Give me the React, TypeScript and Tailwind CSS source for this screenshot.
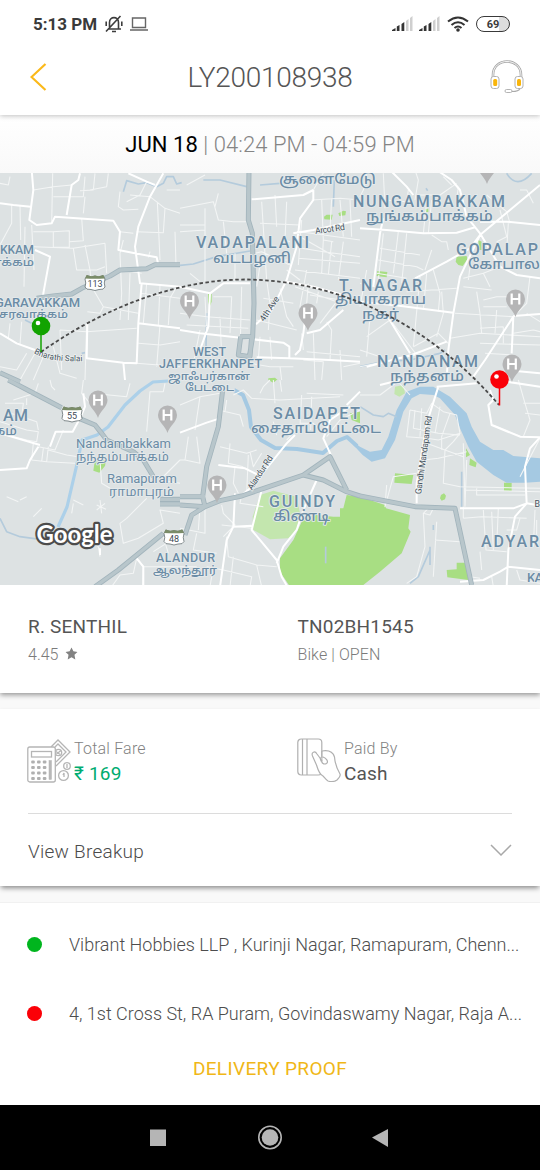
import React from "react";

type Tile = {
  x: number;
  y: number;
  minor?: string;
  main?: string;
  highway?: string;
  stream?: string;
  river?: string;
  park?: string;
  paleParks?: string;
};

const tiles: Tile[] = [
  {
    x: 0,
    y: 170,
    minor:
      "M30 20L25 45L0 40M35 105L35 160L0 225M60 105L62 210M155 160L158 10M160 80L250 80L255 20M250 130L255 80M285 10L280 60L240 62M215 45L160 50L100 60M100 185L158 185L208 182L208 232L160 232L160 185M208 215L250 212L245 145M95 165L102 300M75 170L72 350M102 230L220 235L315 220M220 235L230 300L290 300L315 290M255 225L270 300L275 350L310 410L300 430L262 425M315 220L320 310M360 185L400 190M370 210L360 250L365 370M410 185L490 188L495 115L450 80M450 80L390 75M440 35L420 75L380 95M360 65L355 110L370 120L415 118M500 60L540 60M495 115L540 130M472 95L480 270M525 185L528 285M365 370L360 450M365 300L425 310M390 310L385 450M310 410L415 430M420 370L540 385M440 340L430 460M480 345L475 465M530 350L510 385L505 465M180 480L260 485L410 475M180 480L185 600M160 530L180 610L230 625M260 460L255 630M415 520L480 525L540 515M410 580L540 590M480 465L470 590M65 455L60 525M30 460L25 505M0 590L50 600L80 550M105 550L60 630M130 560L100 630M325 10L320 50L270 60M450 245L445 262",
    main: "M0 100L40 105L92 110M95 0L100 60L88 150L110 165L155 160L165 140L340 152L360 185L355 240L405 250L470 262L475 285M240 10L235 30L215 45L200 135M490 10L450 80L415 170L405 230L420 340L540 350M0 490L50 520L105 540M415 460L540 475M105 240L150 260L130 370L130 400M385 10L440 35L465 45M425 340L415 460L410 580L370 578L260 565L262 460M370 578L375 630",
    highway: "M110 385L160 378L215 372L245 355L330 318L360 300L440 296L465 284L540 284M0 608L60 635",
    stream: "M370 65L380 32L415 42L440 38L470 50L490 40L500 20L520 20L530 42L545 38M75 450L95 460M245 550L255 548",
  },
  {
    x: 180,
    y: 170,
    minor:
      "M20 45L75 15M0 115L100 95L115 150L160 155L200 155M75 115L75 335M75 120L75 180L0 185M105 110L115 70M0 165L75 165M130 155L140 250M165 250L165 335M30 310L60 335M240 270L330 270M245 95L260 330M240 160L360 165M225 250L245 245L330 285M320 95L315 210L330 215M285 75L290 170M360 185L540 210M365 150L355 285M400 60L435 0M395 90L480 85L540 90M425 90L430 210L460 215M455 85L450 180M480 90L490 200M510 90L515 200M365 235L430 245L540 260M355 265L540 280M345 300L540 325M430 210L425 310M455 215L445 315M490 215L475 330M360 200L430 240L465 260M380 300L360 410L370 450M385 340L380 400M345 350L470 395L420 460M390 375L540 400M300 355L320 440L340 470M250 385L340 400M230 450L350 480M260 330L270 400L265 480M320 300L360 330M415 365L410 400M240 285L230 350M0 430L80 440L210 450M20 465L205 475M75 380L80 480M100 380L155 380L150 490M120 440L125 560M185 350L180 550M240 500L235 570M270 500L275 570M365 490L370 540M400 490L405 630M440 455L455 480L450 570M480 540L485 630M380 545L540 560M370 570L430 575L425 630M490 590L540 580M340 590L270 590L210 580M300 590L305 630M60 480L30 630",
    main: "M0 350L90 370L130 340L210 340M90 370L85 470L60 540M0 480L60 490L310 518L328 530L328 565L230 562M400 60L400 90L360 145L350 230L320 330L275 420L228 463M400 60L370 75L215 88M340 190L400 180L540 150M320 335L400 350L490 375M375 450L370 490L360 540L345 555M328 565L450 570L540 575M380 490L420 480L490 420",
    highway: "M207 0L205 150L217 190L222 400L218 500L208 560M180 500L215 500L210 560L175 555L182 500",
    stream: "M70 30L120 30L200 50M240 45L300 40L400 30M463 30L460 110M80 430L78 530M0 286L40 282L110 260L210 243",
    park: "M432 140L440 134L458 134L455 149L433 148ZM475 130L490 122L498 124L496 136L478 138ZM84 372H95V395L89 410L84 395ZM265 625L285 623L293 630H265Z",
  },
  {
    x: 360,
    y: 170,
    minor:
      "M20 10L10 60L0 80M75 90L140 95L145 60M75 115L70 10M165 0L175 30L165 90M170 75L240 75L290 40M200 95L190 190M215 90L205 190M215 195L245 215L260 215L265 240M70 190L55 330M115 185L100 310M140 190L125 340M60 235L180 255M55 270L170 290L190 300M50 310L140 325M215 240L195 300M180 320L160 530M200 310L190 420M220 300L240 370L235 425M140 365L290 355M245 365L250 430L230 500M0 340L45 350M20 300L0 410M30 440L20 560M90 450L20 500M80 435L170 555L0 590M160 530L235 490L265 520M0 540L60 560M310 325L370 310L420 290M310 350L395 360M330 290L325 330M285 430L460 440M350 365L360 430M370 390L410 380L440 380M370 410L440 410M360 430L365 490M410 420L405 490M360 490L540 500M360 520L540 525M360 475L430 470M430 470L430 520M270 505L360 490M375 550L460 555M510 320L500 400L460 440M500 430L540 455M460 490L520 480L540 485M520 100L500 60L480 60M420 120L440 200L410 215M445 160L440 240M380 75L410 100L440 125L450 160M295 50L290 90L300 110M250 20L275 45M370 310L390 350",
    main: "M90 0L140 50L160 75M70 145L60 190L40 350M0 175L80 180L190 190L290 188L345 172M230 0L275 30L300 60L320 140L360 190L420 290L470 315L540 325M540 45L450 120L360 195L330 235L260 275L165 325M360 155H440L540 165M360 195L300 320L280 430L265 540L260 630M460 440L375 570L340 620M460 440L455 550M0 395L100 405L280 428M80 435L150 550M440 600L540 610M20 590L155 555L260 515M460 438L540 432",
    stream: "M440 10Q470 60 515 10M0 590L70 575L150 570L240 550L255 540M198 55L203 62",
    park: "M290 260L320 258L322 268L308 288L295 285L287 275ZM52 303L82 306L80 322L50 318ZM355 210L365 215V240H357ZM195 118L205 116V126H196Z",
  },
  {
    x: 0,
    y: 380,
    minor:
      "M0 125L80 150L115 155L110 185L80 180L0 160M15 70L70 70L65 110L110 125L115 150M80 55L80 75M30 100L70 110M165 30L155 20L150 0M115 10L105 40L40 60M250 0L245 40L270 70M275 40L380 50L390 10M440 155L450 35L490 35L495 10M145 200L140 245L225 250M145 210L200 225L235 230M115 200L165 210L190 150M130 205L125 245M100 190L95 240L140 245M300 240L305 310L330 325M440 355L380 415L360 430L370 490L415 475L440 460L490 430L480 390L540 400M410 535L400 580L360 585L335 620M415 540L430 560L540 560M430 560L428 620M540 240L480 300L540 310M20 350L55 365M60 360L80 350M100 410L125 385M280 490L295 500L300 530M220 360L250 375M215 400L220 370M290 390L315 370M300 360L305 400M290 375L318 388M490 470L505 520M460 515L515 480",
    main: "M0 270L80 265L90 240L115 200M250 40L255 80L240 115L218 155L167 155L150 200M410 535L430 560V620M300 505V525M0 160L120 195",
    highway: "M25 0L185 83M230 112L285 135L305 160L320 180L400 215L430 240L460 290M480 358H540M480 372H540M490 460L355 570L285 620",
    stream: "M0 415L20 455L60 470L120 478",
    park: "M284 245L318 240L315 258L298 278L280 272Z",
  },
  {
    x: 180,
    y: 380,
    minor:
      "M160 45L190 30L215 55L300 60L480 50M270 0L250 20L240 40M300 0L305 35M365 45L360 140L320 180M395 50L392 150M280 125L290 165M0 75L60 50L120 40M25 170L15 240L60 250L50 170M0 240L15 240M60 50L45 150M115 90L180 105L190 140M140 60L135 95M120 200L200 220L230 210M150 190L145 250L190 260M210 215L220 260L245 220M205 225L200 340M165 260L160 310L175 340M60 380L55 450M75 380L75 460L0 445M125 375L130 400L165 435L130 470M185 345L180 370L250 380M125 435L215 445M140 470L145 530L230 555L290 560M100 560L90 620M50 460L40 510L110 520M160 530L150 620M0 560L50 560M80 560L130 570L215 590L210 620M230 555L245 620M280 0L285 70M430 160L400 130L360 130M380 40L490 45M440 170L480 120L540 90",
    main: "M0 158L80 128L120 115M115 255L195 265L245 290M180 350L210 325L240 290L320 190L345 165M245 330L215 450L290 540L305 590L325 625M410 300L370 390L350 450L310 500L290 550M160 440L215 437M160 440L140 480L120 620M510 80L450 120L430 175L455 230M165 340L160 440M540 35L500 75",
    highway: "M128 30L115 140L80 260L68 350L75 380L0 375M0 350L75 350M75 380L120 362L185 348L260 322L370 285L450 230L500 330M370 285L430 300L500 335L540 348M75 380L35 405L15 465",
    stream: "M437 500V550",
    park: "M500 345L540 350V620H330L300 575L300 535L340 480L370 415L410 405L460 410L480 410V385H490ZM510 100L540 95V130L515 120ZM265 0H290L280 8Z",
    paleParks: "M220 450L218 410L240 345L280 332L350 350L360 400L350 450L325 475L270 478Z",
  },
  {
    x: 360,
    y: 380,
    minor:
      "M0 45L60 45L120 0M110 0L150 45M150 90L200 100L215 70L250 95L290 105L300 160L280 185L255 210L250 310L300 320L540 325M150 90L140 170L200 175L235 180L300 160M165 90L160 145L235 160L300 165M185 85L180 170M240 80L225 160M270 100L245 170L245 210M200 190L255 210L310 230M190 240L235 235L320 215M310 190L315 380M80 315L75 380L100 290L170 280M320 240L315 380M350 325L350 345L495 345M315 330L540 335M310 415L365 410L500 415M310 380V415M370 390L378 510L440 515M395 395L400 510M415 385L410 500M360 515L365 570M480 415L470 450L440 450M525 390L520 500M230 425L220 590M225 480L300 485M205 385L190 400L195 500L170 590L140 610M190 400L210 405L220 385M330 590L360 595M395 590L400 620M470 570L480 600L540 610M475 0L495 70L510 120L490 170M490 70H540M400 135L485 170M495 100L540 105M540 175L480 290M530 420V500",
    main: "M235 20L200 130L170 310L170 370M390 30L400 60L385 75L395 135L480 170L540 172L510 205L495 260L500 370L460 385H300M500 370L465 410L445 510L440 620M500 370L530 375M120 0L60 15M300 605L370 600L420 575L445 560L540 570M440 5L540 20M230 20L350 10",
    highway: "M0 348L165 380L285 385L335 615",
    stream: "M0 80L40 105L70 110L85 100L110 110M220 435V450M210 500V555M210 510L175 590L150 610M305 275V380",
    river:
      "M-20 185L0 200L30 215L65 210L85 170L110 90L140 35L180 20H220L270 50L320 100L335 140L360 185L400 210L430 210L460 228L540 235V305L495 308L440 308L400 285L350 245L325 200L300 145L285 105L240 55L220 45L180 42L155 55L130 95L105 180L75 235L35 245L8 225L-20 195Z",
    park: "M0 350L75 375L78 385L150 405L145 445L152 455L125 520L60 575L10 615H0ZM105 280L160 285L155 312L103 308ZM243 345L252 340L258 347L255 358L245 362L240 355ZM432 308H455V333H432ZM318 205L330 225L318 232ZM330 235L350 248L347 262L328 255ZM260 570L290 568V548H322L325 600L262 592Z",
    paleParks: "M105 20L130 15L135 40L118 50L103 42Z",
  },
];

function Layer({
  pick,
  ...rest
}: { pick: keyof Tile } & React.SVGProps<SVGPathElement>) {
  return (
    <>
      {tiles.map((t) =>
        t[pick] ? (
          <path
            key={`${t.x}-${t.y}`}
            transform={`translate(${t.x} ${t.y}) scale(0.33333)`}
            d={t[pick] as string}
            strokeLinejoin="round"
            fill="none"
            {...rest}
          />
        ) : null,
      )}
    </>
  );
}

// x, y (baseline), width, size, weight, text
type Label = [number, number, number, number, number, string];
const labels: Label[] = [
  [279, 184, 97, 14, 500, "சூளைமேடு"],
  [353, 207, 152, 16, 500, "NUNGAMBAKKAM"],
  [366, 221, 127, 14, 500, "நுங்கம்பாக்கம்"],
  [196, 248, 113, 16, 500, "VADAPALANI"],
  [213, 262.8, 78, 14, 500, "வடபழனி"],
  [456, 254.5, 82, 16, 500, "GOPALAP"],
  [468, 268.8, 72, 14, 500, "கோபால"],
  [0, 253.5, 34, 12.5, 500, "KKAM"],
  [-15, 265.5, 49, 11, 500, "ராக்கம்"],
  [-5, 306.8, 85, 13, 500, "GARAVAKKAM"],
  [-1, 318, 69, 11, 500, "சரவாக்கம்"],
  [339, 290.5, 83, 16, 500, "T. NAGAR"],
  [335, 304.3, 91, 14, 500, "தியாகராய"],
  [362, 319, 37, 14, 500, "நகர்"],
  [193, 356.4, 33, 12.5, 500, "WEST"],
  [159, 368.2, 103, 12.5, 500, "JAFFERKHANPET"],
  [168, 380, 82, 11, 500, "ஜாஃபர்கான்"],
  [185, 391, 49, 11, 500, "பேட்டை"],
  [377, 366.8, 101, 16, 500, "NANDANAM"],
  [390, 381.2, 74, 14, 500, "நந்தனம்"],
  [273, 419, 87, 16, 500, "SAIDAPET"],
  [251, 433.3, 130, 14, 500, "சைதாப்பேட்டை"],
  [3, 421, 25, 16, 500, "AM"],
  [-14, 435, 31, 13, 500, "ரகம்"],
  [76, 448, 95, 13, 400, "Nandambakkam"],
  [76, 461.3, 93, 12, 400, "நந்தம்பாக்கம்"],
  [107, 482.8, 70, 13, 400, "Ramapuram"],
  [109, 496.3, 65, 12, 400, "ராமாபுரம்"],
  [269, 506.5, 66, 16, 500, "GUINDY"],
  [273, 521.3, 57, 14, 500, "கிண்டி"],
  [156, 562.1, 59, 12.5, 500, "ALANDUR"],
  [153, 574, 64, 11, 500, "ஆலந்தூர்"],
  [481, 546.8, 58, 16, 500, "ADYAR"],
  [527, 582, 16, 13, 500, "KA"],
];

function Hospital({ x, y }: { x: number; y: number }) {
  return (
    <g transform={`translate(${x} ${y})`}>
      <path d="M0 18C-2 11-9.500 7-9.500 0A9.500 9.500 0 0 1 9.500 0C9.500 7 2 11 0 18Z" fill="#b5b5b6" />
      <path d="M-3.800-5.500V5.500M3.800-5.500V5.500M-4 0H4" stroke="#fff" strokeWidth="2.200" />
    </g>
  );
}

function Shield({ x, y, children }: { x: number; y: number; children: string }) {
  return (
    <g transform={`translate(${x} ${y})`}>
      <path
        d="M-8-7.500Q-4-5 0-7Q4-5 8-7.500L10-4Q8.500 0 10 4Q9 7 4 6.500L0 7.500L-4 6.500Q-9 7-10 4Q-8.500 0-10-4Z"
        fill="#fff"
        stroke="#657072"
        strokeWidth=".8"
      />
      <path d="M-8.500-8Q-4-6 0-7.500Q4-6 8.500-8L9.800-4.500Q0-4-9.800-4.500Z" fill="#7a8c68" />
      <text textAnchor="middle" y="4.200" fontSize="9" fill="#3e4a55">
        {children}
      </text>
    </g>
  );
}

function Pin({ x, y, color }: { x: number; y: number; color: string }) {
  return (
    <g transform={`translate(${x} ${y})`}>
      <path d="M0 8V26" stroke={color} strokeWidth="1.500" />
      <circle r="9.300" fill={color} />
      <circle cx="-3" cy="-3" r="2.300" fill="#fff" />
    </g>
  );
}

function RouteMap() {
  return (
    <svg viewBox="0 173 540 412" className="relative z-[1] block h-[412px] w-full shrink-0 font-['Roboto','Noto_Sans_Tamil','Noto_Sans',sans-serif]">
      <rect y="173" width="540" height="412" fill="#dde2e3" />
      <Layer pick="paleParks" style={{ fill: "#c3e6ae" }} />
      <Layer pick="park" style={{ fill: "#a8de83" }} />
      <Layer pick="river" style={{ fill: "#a5c9e2" }} />
      <Layer pick="stream" stroke="#b4cbdc" strokeWidth="5" />
      <path
        d="M234 390L243 395L249 410L251 427L261 440L275 448L297 449L323 453L337 441L347 437L357 446"
        fill="none"
        stroke="#a5c9e2"
        strokeWidth="4"
        strokeLinejoin="round"
      />
      <path d="M168 381L153 382L140 391L125 405L108 427L97 435L82 440L77 464L67 507L58 527" fill="none" stroke="#acd0e9" strokeWidth="3.200" strokeLinejoin="round" />
      <Layer pick="minor" stroke="#f3f5f5" strokeWidth="3.200" />
      <Layer pick="main" stroke="#fff" strokeWidth="6" />
      <Layer pick="highway" stroke="#a2b4bc" strokeWidth="15" />
      <Layer pick="highway" stroke="#b8c6cb" strokeWidth="10" />

      <Hospital x={189.5} y={301} />
      <Hospital x={308} y={313} />
      <Hospital x={515.5} y={299} />
      <Hospital x={512} y={364} />
      <Hospital x={98} y={400} />
      <Hospital x={167.5} y={415} />
      <Hospital x={217} y={485} />
      <Hospital x={487} y={166} />
      <Shield x={95} y={283}>113</Shield>
      <Shield x={72} y={414.5}>55</Shield>
      <Shield x={174} y={537.5}>48</Shield>

      <g fill="#6b8ca5" stroke="#e6ebed" strokeWidth="1.600" paintOrder="stroke" strokeLinejoin="round">
        {labels.map(([x, y, w, size, weight, text]) => (
          <text
            key={text}
            x={x}
            y={y}
            fontSize={size}
            fontWeight={weight}
            textLength={w}
            lengthAdjust={/[A-Z]/.test(text) ? "spacing" : "spacingAndGlyphs"}
          >
            {text}
          </text>
        ))}
      </g>
      <path id="salai" d="M34 353Q50 363 86 361" fill="none" />
      <g fill="#46535e" stroke="#eef1f1" strokeWidth="1.500" paintOrder="stroke" fontSize="8.800">
        <text transform="translate(315.500 234) rotate(-8)" textLength="30">Arcot Rd</text>
        <text transform="translate(264 322) rotate(-56)" textLength="28">4th Ave</text>
        <text fontSize="8.200">
          <textPath href="#salai" textLength="50">Bharathi Salai</textPath>
        </text>
        <text transform="translate(252 490.500) rotate(-57)" textLength="39">Alandur Rd</text>
        <text transform="translate(421 494.500) rotate(-82)" textLength="79">Gandhi Mandapam Rd</text>
        <text x="534.500" y="507">B</text>
      </g>

      <path
        d="M41 352C100 310 175 279 247 279.500C335 281 425 319 499 405"
        fill="none"
        stroke="#4a4a4a"
        strokeWidth="1.800"
        strokeDasharray="3.500 2.500"
      />
      <Pin x={41} y={326} color="#12a300" />
      <Pin x={499.5} y={379.5} color="#fa0008" />
      <text
        x="36.500"
        y="542.500"
        fontSize="25.500"
        fontWeight="700"
        textLength="76"
        lengthAdjust="spacingAndGlyphs"
        fill="#fff"
        stroke="#4c4c4c"
        strokeWidth="4.500"
        strokeLinejoin="round"
        paintOrder="stroke"
        className="font-['Lato',sans-serif]"
      >
        Google
      </text>
    </svg>
  );
}

function Signal() {
  return (
    <svg viewBox="0 0 21 16" className="h-4 w-[21px]">
      <path d="M0 15V14L3.500 12V15ZM4.800 15V10.500L7.500 9V15ZM9.500 15V8L12.300 6V15Z" fill="#333" />
      <path d="M14 15V5L16.500 3V15ZM18 15V2L20.500 0V15Z" fill="#cfcfcf" />
    </svg>
  );
}

function StatusBar() {
  return (
    <div className="flex h-12 shrink-0 items-center pl-[33px] pr-[30px] text-[#3a3a3a]">
      <span className="w-[65px] whitespace-nowrap pt-px text-[17px] font-bold">5:13 PM</span>
      <svg viewBox="0 0 18 18" className="ml-[7px] h-[18px] w-[18px]" fill="none" stroke="#3d3d3d" strokeWidth="1.600">
        <path d="M3 14H16M4.500 13.500V7.500C4.500 1 13.500 1 13.500 7.500V13.500M1 16.500L15.500 1M1.200 6.500V11M16.800 6.500V11M7 16.500H11" />
      </svg>
      <svg viewBox="0 0 18 14" className="ml-[7px] h-3.5 w-[18px]" fill="none" stroke="#666" strokeWidth="1.400">
        <path d="M2.500 1H15.500V10.500H2.500ZM0 13H18" />
      </svg>
      <div className="ml-auto flex items-center">
        <Signal />
        <div className="ml-1.5">
          <Signal />
        </div>
        <svg viewBox="0 0 22 16" className="ml-[7px] h-4 w-[22px]" fill="none" stroke="#333" strokeWidth="2.100">
          <path d="M1 5.500Q11-2.500 21 5.500M4.500 9Q11 3.500 17.500 9M7.500 12Q11 9 14.500 12" />
          <circle cx="11" cy="14" r="1.800" fill="#333" stroke="none" />
        </svg>
        <div className="ml-[7px] flex h-4 w-[34px] items-center justify-center rounded-full border-[1.5px] border-[#3a3a3a] bg-[linear-gradient(90deg,#fff_68%,#ddd_68%)] text-[11px] font-bold leading-none">
          69
        </div>
      </div>
    </div>
  );
}

function Headset() {
  return (
    <svg viewBox="0 0 36 36" className="h-9 w-9" fill="none">
      <path d="M4 18V16C4-2 32-2 32 16V18" stroke="#a7a7a7" strokeWidth="2.600" />
      <path d="M4 18V16C4-2 32-2 32 16V18" stroke="#f5f5f5" strokeWidth="1" />
      <rect x="2" y="17.500" width="8" height="12" rx="2.500" fill="#fff" stroke="#b2b2b2" />
      <rect x="26" y="17.500" width="8" height="12" rx="2.500" fill="#fff" stroke="#b2b2b2" />
      <rect x="4.200" y="20" width="4" height="7" rx="1.500" fill="#f9b50b" />
      <rect x="28" y="20" width="4" height="7" rx="1.500" fill="#f9b50b" />
      <path d="M31 29.500C30 32 26 32.500 23 32.500" stroke="#aaa" strokeWidth="1.200" />
      <rect x="16" y="30.500" width="7" height="3" rx="1.500" fill="#fff" stroke="#aaa" strokeWidth=".9" />
    </svg>
  );
}

function FareIcon() {
  return (
    <svg viewBox="0 0 44 44" className="h-11 w-11 shrink-0" fill="none" stroke="#b5b5b5" strokeWidth="1.300">
      <path d="M24 8L31 1L43 13L29 27M28 8L31 5L39 13L29 23" />
      <circle cx="31.500" cy="13.500" r="3.200" />
      <path d="M29.500 15L34 11.500M29 12.500L33 15.500" />
      <rect x=".8" y="8" width="27.500" height="35" rx="2" fill="#fff" />
      <rect x="4.500" y="12.500" width="20" height="5.500" />
      {[21.5, 27, 32.5, 38].map((y) =>
        [4.2, 10, 15.8].map((x) => (
          <rect key={`${x}-${y}`} x={x} y={y} width="3.600" height="3" rx="1" fill="#b0b0b0" stroke="none" />
        )),
      )}
      <rect x="22" y="21.500" width="2.500" height="19" fill="#b8b8b8" strokeWidth=".5" />
      <circle cx="40" cy="27" r="3.300" fill="#fff" />
      <path d="M40 25V29M36 36L37 34V38" />
      <circle cx="36.500" cy="36.500" r="4.900" />
    </svg>
  );
}

function PaidIcon() {
  return (
    <svg viewBox="0 0 44 44" className="h-11 w-11 shrink-0" fill="none" stroke="#b0b0b0" strokeWidth="1.200" strokeLinejoin="round">
      <rect x=".8" y="1" width="24" height="36" rx="3.500" />
      <path d="M5.500 1V37M10 1V37" />
      <path
        d="M25 13C31 12 36 14 37.500 19C38 25 40 31 43 36C44 38 42 40 40 42C37 44 34 44 31 43C29 42 27 39 26 38C23 37 21 32 19.500 27L15.500 18C14 14 18 12.500 20 16L23 20C24 25 27 27 29.500 25.500C32 23.500 29 20 26 19C23 18 24 22 25 23"
        fill="#fff"
      />
      <path d="M25 13V18" />
    </svg>
  );
}

function Address({ color, children }: { color: string; children: string }) {
  return (
    <div className="flex h-[69px] items-center pl-[27px]">
      <span className={`h-[15px] w-[15px] shrink-0 rounded-full ${color}`} />
      <span className="ml-[27px] whitespace-nowrap text-[18px] font-light text-[#4d4d4d]">{children}</span>
    </div>
  );
}

export default function App() {
  return (
    <div className="flex h-[1170px] w-[540px] flex-col overflow-hidden bg-[#f9f9f9] font-['Roboto','Noto_Sans',sans-serif]">
      <header className="relative z-10 h-[115px] shrink-0 bg-white shadow-[0_1px_5px_rgba(0,0,0,0.25)]">
        <StatusBar />
        <div className="flex h-[58px] items-center justify-between pl-[30px] pr-[15px]">
          <svg viewBox="0 0 17 28" className="h-7 w-[17px]" fill="none" stroke="#fbb91a" strokeWidth="2.200">
            <path d="M15.500 1L1.500 14L15.500 27" />
          </svg>
          <h1 className="ml-1 pt-0.5 text-[28px] font-light tracking-[-0.3px] text-[#555]">LY200108938</h1>
          <Headset />
        </div>
      </header>
      <div className="flex h-[58px] shrink-0 items-center justify-center whitespace-pre bg-gradient-to-b from-white to-[#f9f9f9] pt-px text-[22px] font-light tracking-[0.07px] text-[#858585]">
        <span className="font-normal text-black">JUN 18</span> | 04:24 PM - 04:59 PM
      </div>
      <RouteMap />
      <section className="grid h-[108px] shrink-0 grid-cols-2 bg-white px-7 pt-[29px] shadow-[0_2px_5px_rgba(0,0,0,0.4)]">
        <div>
          <div className="text-[19px] leading-[26px] tracking-[0.2px] text-[#555]">R. SENTHIL</div>
          <div className="flex items-center gap-[7px] text-[16px] font-light leading-[30px] text-[#7b7b7b]">
            4.45
            <svg viewBox="0 0 24 24" className="-mt-1 h-[13px] w-[13px]" fill="#828282">
              <path d="M12 1L15.500 8L23 9L17.500 14.500L19 23L12 19L5 23L6.500 14.500L1 9L8.500 8Z" />
            </svg>
          </div>
        </div>
        <div className="pl-[27.5px]">
          <div className="text-[19px] leading-[26px] tracking-[0.2px] text-[#555]">TN02BH1545</div>
          <div className="text-[16px] font-light leading-[30px] tracking-[0.1px] text-[#7b7b7b]">Bike | OPEN</div>
        </div>
      </section>
      <section className="relative mt-4 flex h-[177px] shrink-0 flex-col bg-white px-7 shadow-[0_3px_5px_-1px_rgba(0,0,0,0.45)]">
        <div className="grid h-[105px] grid-cols-2 border-b border-[#dcdcdc] pt-[28px]">
          <div className="flex gap-[3px]">
            <div className="-ml-px pt-[2px]"><FareIcon /></div>
            <div>
              <div className="text-[16px] font-light leading-6 tracking-[0.2px] text-[#828282]">Total Fare</div>
              <div className="pt-px text-[19px] leading-6 tracking-[0.2px] text-[#00ac70]">₹ 169</div>
            </div>
          </div>
          <div className="flex gap-[3px] pl-[27px]">
            <div className="pt-px"><PaidIcon /></div>
            <div>
              <div className="text-[16px] font-light leading-6 tracking-[0.2px] text-[#828282]">Paid By</div>
              <div className="pt-px text-[19px] leading-6 tracking-[0.2px] text-[#555]">Cash</div>
            </div>
          </div>
        </div>
        <div className="flex flex-1 items-center justify-between pt-1">
          <span className="text-[19px] font-light tracking-[0.25px] text-[#4c4c4c]">View Breakup</span>
          <svg viewBox="0 0 22 14" className="-mt-1 h-3.5 w-[22px]" fill="none" stroke="#a8a8a8" strokeWidth="1.500">
            <path d="M1 2L11 12L21 2" />
          </svg>
        </div>
      </section>
      <section className="mt-[17px] flex h-[202px] shrink-0 flex-col bg-white pt-[7px] shadow-[0_0_1px_rgba(0,0,0,0.2)]">
        <Address color="bg-[#00b51e]">Vibrant Hobbies LLP , Kurinji Nagar, Ramapuram, Chenn...</Address>
        <Address color="bg-[#fb0007]">4, 1st Cross St, RA Puram, Govindaswamy Nagar, Raja A...</Address>
        <button className="h-[43px] text-[19px] tracking-[0.35px] text-[#f0b717]">DELIVERY PROOF</button>
      </section>
      <nav className="h-[65px] shrink-0 bg-black">
        <svg viewBox="0 0 540 65" className="h-full w-full" fill="#b5b5b5">
          <rect x="150" y="24.500" width="16" height="16.500" />
          <circle cx="270" cy="32.500" r="8.300" />
          <circle cx="270" cy="32.500" r="11.200" fill="none" stroke="#b5b5b5" strokeWidth="1.600" />
          <path d="M372 32.500L388 24V42Z" />
        </svg>
      </nav>
    </div>
  );
}
